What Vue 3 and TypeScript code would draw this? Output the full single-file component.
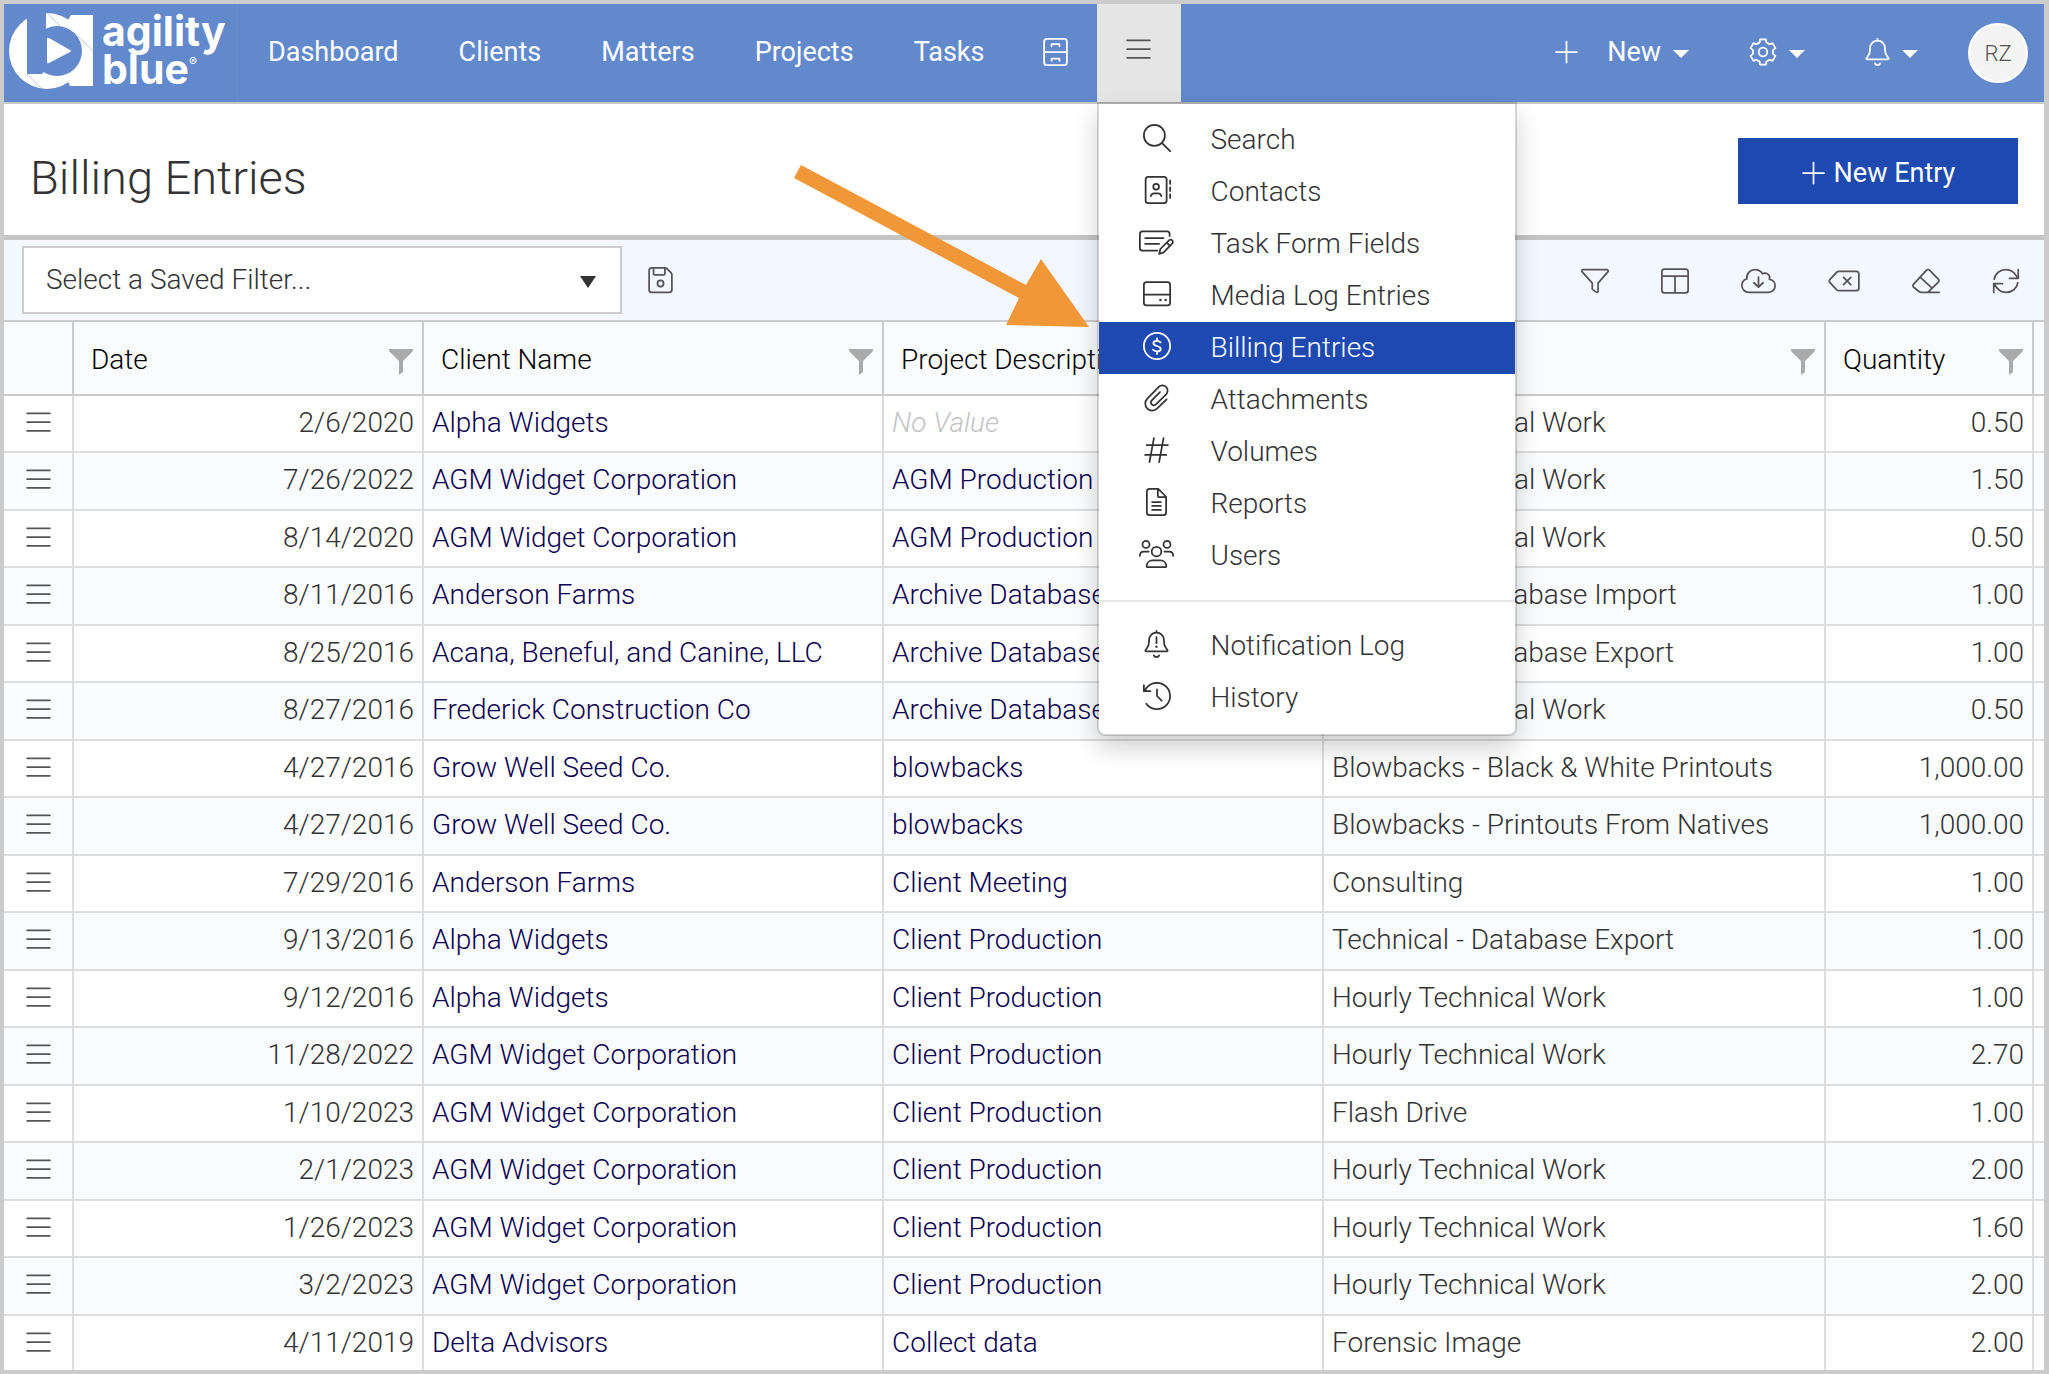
<script setup lang="ts">
import { h, ref } from 'vue'

interface Glyph {
  w: number
  d: string
  dots?: [number, number, number][]
  rings?: [number, number, number][]
}

interface MenuEntry {
  label: string
  icon: string
}

interface BillingRow {
  date: string
  client: string
  project: string
  activity: string
  quantity: string
}

// Six-toothed cog outline on a 512 grid
function cogOutline(): string {
  const steps: [number, number][] = [[-13, 238], [13, 238], [19, 186], [41, 186]]
  const points: string[] = []
  for (let tooth = 0; tooth < 6; tooth++) {
    for (const [offset, radius] of steps) {
      const angle = ((tooth * 60 - 90 + offset) * Math.PI) / 180
      points.push(`${Math.round(256 + radius * Math.cos(angle))} ${Math.round(256 + radius * Math.sin(angle))}`)
    }
  }
  return `M${points.join('L')}Z`
}

const bell =
  'M224 16v32M224 48c-80 0-136 62-136 136v32c0 48-16 90-46 126l-16 20c-12 14-6 30 14 30H408c20 0 26-16 14-30l-16-20c-30-36-46-78-46-126v-32c0-74-56-136-136-136zM176 464c6 20 26 32 48 32s42-12 48-32'

const glyphs: Record<string, Glyph> = {
  cabinet: {
    w: 448,
    d: 'M64 16H384a48 48 0 0 1 48 48V448a48 48 0 0 1-48 48H64a48 48 0 0 1-48-48V64a48 48 0 0 1 48-48zM16 256H432M152 152V112H296V152M152 416V376H296V416',
  },
  bars: { w: 448, d: 'M16 96H432M16 256H432M16 416H432' },
  plus: { w: 448, d: 'M224 64V448M32 256H416' },
  gear: { w: 512, d: cogOutline(), rings: [[256, 256, 78]] },
  bell: { w: 448, d: bell },
  bellAlert: { w: 448, d: bell + 'M224 128V240', dots: [[224, 304, 22]] },
  search: { w: 512, d: 'M344 344L496 496', rings: [[208, 208, 192]] },
  contacts: {
    w: 512,
    d: 'M96 16H384a48 48 0 0 1 48 48V448a48 48 0 0 1-48 48H96a48 48 0 0 1-48-48V64a48 48 0 0 1 48-48zM144 368c6-34 30-52 64-52h64c34 0 58 18 64 52M496 80V144M496 208V272M496 336V400',
    rings: [[240, 196, 52]],
  },
  form: {
    w: 640,
    d: 'M336 412H64a48 48 0 0 1-48-48V108a48 48 0 0 1 48-48H512a48 48 0 0 1 48 48V144M112 184H448M112 288H368M368 476L390 384L548 228c18-18 42-18 58 0c18 18 18 42 0 58L450 446zM508 268L566 326',
  },
  drive: {
    w: 512,
    d: 'M64 40H448a48 48 0 0 1 48 48V416a48 48 0 0 1-48 48H64a48 48 0 0 1-48-48V88a48 48 0 0 1 48-48zM16 268H496',
    dots: [[318, 366, 22], [414, 366, 22]],
  },
  dollar: {
    w: 512,
    d: 'M322 190c-20-22-42-30-70-30c-38 0-62 20-62 46c0 30 26 40 66 50s68 22 68 54c0 28-26 46-64 46c-32 0-56-10-76-32M256 116V160M256 356V400',
    rings: [[256, 256, 240]],
  },
  clip: {
    w: 448,
    d: 'M408 280L238 446C186 500 104 500 56 450C6 400 6 318 56 266L266 54C302 16 364 16 400 54C436 90 436 150 400 188L214 374c-22 22-56 22-76 0c-22-22-22-54 0-76L288 150',
  },
  hash: { w: 448, d: 'M177 40L96 476M353 40L272 476M44 165H432M16 347H404' },
  report: {
    w: 384,
    d: 'M64 16H224L368 160V448a48 48 0 0 1-48 48H64a48 48 0 0 1-48-48V64a48 48 0 0 1 48-48zM216 16V136a32 32 0 0 0 32 32H368M112 256H272M112 328H272M112 400H272',
  },
  users: {
    w: 640,
    d: 'M16 288c0-48 30-76 74-76h86M624 288c0-48-30-76-74-76h-86M152 496H488c8 0 12-6 12-14c0-66-48-110-106-110H246c-58 0-106 44-106 110c0 8 4 14 12 14z',
    rings: [[128, 80, 64], [512, 80, 64], [320, 212, 88]],
  },
  history: { w: 512, d: 'M16 56V168H136M34 160A240 240 0 1 1 60 396M256 136V256L340 340' },
  save: {
    w: 448,
    d: 'M16 80a48 48 0 0 1 48-48H304c14 0 26 6 36 14l76 76c10 10 16 22 16 36V432a48 48 0 0 1-48 48H64a48 48 0 0 1-48-48zM96 32V144a16 16 0 0 0 16 16H288a16 16 0 0 0 16-16V32',
    rings: [[224, 320, 56]],
  },
  filter: {
    w: 512,
    d: 'M40 48H472c22 0 32 24 18 40L312 296V444c0 18-20 26-34 16l-62-46c-6-5-10-12-10-20V296L22 88C8 72 18 48 40 48z',
  },
  layout: {
    w: 512,
    d: 'M64 40H448a48 48 0 0 1 48 48V424a48 48 0 0 1-48 48H64a48 48 0 0 1-48-48V88a48 48 0 0 1 48-48zM16 168H496M256 168V472',
  },
  cloud: {
    w: 640,
    d: 'M144 464C72 464 16 408 16 338C16 280 54 232 106 216C98 118 172 48 258 48C318 48 366 78 394 124C458 90 546 140 520 228C584 236 624 286 624 344C624 412 570 464 504 464ZM320 184V368M236 288L320 368L404 288',
  },
  backspace: {
    w: 576,
    d: 'M192 80H512a48 48 0 0 1 48 48V384a48 48 0 0 1-48 48H192c-14 0-26-4-36-14L28 280c-14-14-14-34 0-48L156 94c10-10 22-14 36-14zM280 190L412 322M412 190L280 322',
  },
  eraser: {
    w: 512,
    d: 'M496 464H164c-12 0-22-4-30-12L30 370c-18-18-18-40 0-58L266 58c16-16 38-16 54 0L482 222c16 16 16 38 0 54L290 464M148 184L366 386',
  },
  refresh: {
    w: 512,
    d: 'M40 224C56 120 146 48 256 48c92 0 158 52 208 144M480 48V208H320M472 288c-16 104-106 176-216 176c-92 0-158-52-208-144M32 464V304H192',
  },
}

const Icon = (props: { name: string }) => {
  const g = glyphs[props.name]
  return h(
    'svg',
    {
      class: 'icon',
      viewBox: `0 0 ${g.w} 512`,
      height: 28,
      width: Math.round((g.w * 28) / 512),
      fill: 'none',
      stroke: 'currentColor',
      'stroke-width': 32,
      'stroke-linecap': 'round',
      'stroke-linejoin': 'round',
      'aria-hidden': 'true',
    },
    [
      h('path', { d: g.d }),
      ...(g.rings ?? []).map(([cx, cy, r]) => h('circle', { cx, cy, r })),
      ...(g.dots ?? []).map(([cx, cy, r]) => h('circle', { cx, cy, r, fill: 'currentColor', stroke: 'none' })),
    ],
  )
}
Icon.props = ['name']

const links: string[] = ['Dashboard', 'Clients', 'Matters', 'Projects', 'Tasks']

const menu: MenuEntry[] = [
  { label: 'Search', icon: 'search' },
  { label: 'Contacts', icon: 'contacts' },
  { label: 'Task Form Fields', icon: 'form' },
  { label: 'Media Log Entries', icon: 'drive' },
  { label: 'Billing Entries', icon: 'dollar' },
  { label: 'Attachments', icon: 'clip' },
  { label: 'Volumes', icon: 'hash' },
  { label: 'Reports', icon: 'report' },
  { label: 'Users', icon: 'users' },
]

const logMenu: MenuEntry[] = [
  { label: 'Notification Log', icon: 'bellAlert' },
  { label: 'History', icon: 'history' },
]

const tools: MenuEntry[] = [
  { label: 'Filter', icon: 'filter' },
  { label: 'Layout', icon: 'layout' },
  { label: 'Download', icon: 'cloud' },
  { label: 'Clear filters', icon: 'backspace' },
  { label: 'Reset', icon: 'eraser' },
  { label: 'Refresh', icon: 'refresh' },
]

const columns: string[] = ['Date', 'Client Name', 'Project Description', 'Activity', 'Quantity']

const savedFilter = ref('')
const menuOpen = ref(true)
const current = ref('Billing Entries')

const toRow = ([date, client, project, activity, quantity]: string[]): BillingRow => ({
  date,
  client,
  project,
  activity,
  quantity,
})

const rows: BillingRow[] = [
  ['2/6/2020', 'Alpha Widgets', '', 'Hourly Technical Work', '0.50'],
  ['7/26/2022', 'AGM Widget Corporation', 'AGM Production', 'Hourly Technical Work', '1.50'],
  ['8/14/2020', 'AGM Widget Corporation', 'AGM Production', 'Hourly Technical Work', '0.50'],
  ['8/11/2016', 'Anderson Farms', 'Archive Database', 'Technical - Database Import', '1.00'],
  ['8/25/2016', 'Acana, Beneful, and Canine, LLC', 'Archive Database', 'Technical - Database Export', '1.00'],
  ['8/27/2016', 'Frederick Construction Co', 'Archive Database', 'Hourly Technical Work', '0.50'],
  ['4/27/2016', 'Grow Well Seed Co.', 'blowbacks', 'Blowbacks - Black & White Printouts', '1,000.00'],
  ['4/27/2016', 'Grow Well Seed Co.', 'blowbacks', 'Blowbacks - Printouts From Natives', '1,000.00'],
  ['7/29/2016', 'Anderson Farms', 'Client Meeting', 'Consulting', '1.00'],
  ['9/13/2016', 'Alpha Widgets', 'Client Production', 'Technical - Database Export', '1.00'],
  ['9/12/2016', 'Alpha Widgets', 'Client Production', 'Hourly Technical Work', '1.00'],
  ['11/28/2022', 'AGM Widget Corporation', 'Client Production', 'Hourly Technical Work', '2.70'],
  ['1/10/2023', 'AGM Widget Corporation', 'Client Production', 'Flash Drive', '1.00'],
  ['2/1/2023', 'AGM Widget Corporation', 'Client Production', 'Hourly Technical Work', '2.00'],
  ['1/26/2023', 'AGM Widget Corporation', 'Client Production', 'Hourly Technical Work', '1.60'],
  ['3/2/2023', 'AGM Widget Corporation', 'Client Production', 'Hourly Technical Work', '2.00'],
  ['4/11/2019', 'Delta Advisors', 'Collect data', 'Forensic Image', '2.00'],
].map(toRow)
</script>

<template>
  <div class="app">
    <header class="topbar">
      <a class="brand" href="#" aria-label="agility blue home">
        <svg class="mark" viewBox="8 12 86 78" width="86" height="78" aria-hidden="true">
          <g fill="#fff">
            <circle cx="47" cy="51" r="38" />
            <path d="M68 20L71 15H93V86H70L68 81Z" />
          </g>
          <g class="cut">
            <path d="M27 12H46V60L44 71L42 74H27Z" />
            <circle cx="57" cy="51" r="25" />
          </g>
          <path d="M47 39Q47 37 49 38L70 50Q72 51 70 52L49 63Q47 64 47 62Z" fill="#fff" />
          <path class="seam" d="M47 13L60 26M27 74L41 88M78 36L93 51" />
        </svg>
        <span class="wordmark">
          <span>agility</span>
          <span>blue<sup>®</sup></span>
        </span>
      </a>

      <nav class="nav" aria-label="Main">
        <a v-for="link in links" :key="link" class="nav-link" href="#">{{ link }}</a>
        <a class="nav-link nav-icon" href="#" aria-label="Cabinet"><Icon name="cabinet" /></a>
        <div class="more">
          <button
            class="more-button"
            type="button"
            aria-label="More"
            :aria-expanded="menuOpen"
            @click="menuOpen = !menuOpen"
          >
            <Icon name="bars" />
          </button>
          <div v-if="menuOpen" class="menu">
            <a
              v-for="item in menu"
              :key="item.label"
              class="menu-item"
              :class="{ active: item.label === current }"
              href="#"
              @click.prevent="current = item.label"
            >
              <span class="menu-icon"><Icon :name="item.icon" /></span>{{ item.label }}
            </a>
            <hr class="divider" />
            <a v-for="item in logMenu" :key="item.label" class="menu-item" href="#">
              <span class="menu-icon"><Icon :name="item.icon" /></span>{{ item.label }}
            </a>
          </div>
          <svg class="pointer" viewBox="0 0 296 164" width="296" height="164" aria-hidden="true">
            <path d="M7 1L232 121L247 95L295 163L212 161L225 134L0 14Z" fill="#f09837" />
          </svg>
        </div>
      </nav>

      <div class="account">
        <button class="drop" type="button">
          <Icon name="plus" /><span class="drop-label">New</span><span class="caret"></span>
        </button>
        <button class="drop" type="button" aria-label="Settings"><Icon name="gear" /><span class="caret"></span></button>
        <button class="drop" type="button" aria-label="Notifications"><Icon name="bell" /><span class="caret"></span></button>
        <button class="avatar" type="button">RZ</button>
      </div>
    </header>

    <section class="title-row">
      <h1>Billing Entries</h1>
      <button class="primary" type="button"><Icon name="plus" />New Entry</button>
    </section>

    <section class="toolbar">
      <div class="picker">
        <select v-model="savedFilter" aria-label="Saved filter">
          <option value="">Select a Saved Filter...</option>
        </select>
        <svg class="picker-arrow" viewBox="0 0 16 12" width="16" height="12" aria-hidden="true">
          <path d="M0 0H16L8 12Z" fill="currentColor" />
        </svg>
      </div>
      <button class="tool" type="button" aria-label="Save filter"><Icon name="save" /></button>
      <div class="tools">
        <button v-for="tool in tools" :key="tool.label" class="tool" type="button" :aria-label="tool.label">
          <Icon :name="tool.icon" />
        </button>
      </div>
    </section>

    <main class="grid">
      <table>
        <colgroup>
          <col class="c-menu" />
          <col class="c-date" />
          <col class="c-client" />
          <col class="c-project" />
          <col />
          <col class="c-quantity" />
          <col class="c-end" />
        </colgroup>
        <thead>
          <tr>
            <th></th>
            <th v-for="column in columns" :key="column" scope="col">
              <div class="head">
                <span>{{ column }}</span>
                <button class="head-filter" type="button" :aria-label="'Filter ' + column">
                  <svg viewBox="0 0 24 26" width="24" height="26" aria-hidden="true">
                    <path d="M0 0H24V2L14 12V23L10 26V12L0 2Z" fill="currentColor" />
                  </svg>
                </button>
              </div>
            </th>
            <th></th>
          </tr>
        </thead>
        <tbody>
          <tr v-for="(row, index) in rows" :key="index">
            <td class="row-menu">
              <button type="button" aria-label="Row actions"><Icon name="bars" /></button>
            </td>
            <td class="number">{{ row.date }}</td>
            <td><a href="#">{{ row.client }}</a></td>
            <td>
              <a v-if="row.project" href="#">{{ row.project }}</a>
              <em v-else>No Value</em>
            </td>
            <td>{{ row.activity }}</td>
            <td class="number">{{ row.quantity }}</td>
            <td></td>
          </tr>
        </tbody>
      </table>
    </main>
  </div>
</template>

<style>
body {
  margin: 0;
}
</style>

<style scoped>
.app {
  display: flex;
  flex-direction: column;
  box-sizing: border-box;
  height: 100vh;
  overflow: hidden;
  border: 4px solid #cbcbcb;
  border-right-width: 5px;
  background: #fff;
  color: #333;
  font-family: Roboto, sans-serif;
  font-size: 28px;
  font-weight: 350;
  line-height: 36px;
}

a {
  color: inherit;
  text-decoration: none;
}

button {
  margin: 0;
  padding: 0;
  border: 0;
  background: none;
  color: inherit;
  font: inherit;
  cursor: pointer;
}

.icon {
  display: block;
  flex: none;
}

/* Top bar */
.topbar {
  display: flex;
  flex: none;
  height: 98px;
  border-bottom: 2px solid #c8c8c8;
  background: #6389cd;
  color: #fff;
}

.brand {
  display: flex;
  flex: none;
  box-sizing: border-box;
  width: 234px;
  padding: 8px 0 0 4px;
  gap: 8px;
  border-right: 1px solid #6a8dcc;
}

.mark {
  flex: none;
}

.cut {
  fill: #6389cd;
}

.seam {
  stroke: #b9caea;
  stroke-width: 1;
  fill: none;
}

.wordmark {
  display: flex;
  flex-direction: column;
  font-family: Inter, sans-serif;
  font-size: 41px;
  font-weight: 700;
  line-height: 38px;
}

.wordmark sup {
  font-size: 12px;
  font-weight: 400;
  line-height: 0;
  vertical-align: 18px;
}

.nav {
  display: flex;
}

.nav-link {
  display: flex;
  align-items: center;
  padding: 0 30px 2px;
}

.nav-icon {
  padding: 0 29px 2px 28px;
}

.nav-link,
.drop,
.primary {
  font-size: 27px;
  font-weight: 400;
}

.more {
  position: relative;
  display: flex;
}

.more-button {
  display: flex;
  align-items: center;
  justify-content: center;
  width: 84px;
  padding-bottom: 8px;
  background: #e5e5e5;
  color: #555;
}

.menu {
  position: absolute;
  z-index: 2;
  top: 100%;
  left: 0;
  box-sizing: border-box;
  width: 420px;
  padding: 10px 0;
  border: 2px solid rgba(0, 0, 0, 0.15);
  border-radius: 0 0 8px 8px;
  background: #fff;
  background-clip: padding-box;
  box-shadow: 0 12px 24px rgba(0, 0, 0, 0.18);
  color: #333;
}

.menu-item {
  display: flex;
  align-items: center;
  height: 52px;
  padding-left: 40px;
  gap: 36px;
}

.menu-item.active {
  background: #1d49b0;
  color: #fff;
}

.menu-icon {
  display: flex;
  justify-content: center;
  width: 36px;
  padding-bottom: 4px;
}

.divider {
  height: 2px;
  margin: 18px 0;
  border: 0;
  background: #e5e5e5;
}

.pointer {
  position: absolute;
  z-index: 3;
  top: 160px;
  right: 100%;
  margin-right: 7px;
  pointer-events: none;
}

.account {
  display: flex;
  align-items: center;
  margin-left: auto;
  padding-right: 16px;
}

.drop {
  display: flex;
  align-items: center;
  gap: 12px;
  padding-bottom: 2px;
}

.drop + .drop {
  margin-left: 60px;
}

.drop-label {
  margin-left: 16px;
}

.caret {
  margin-top: 4px;
  border: 8px solid transparent;
  border-top-color: #fff;
  border-bottom-width: 0;
}

.avatar {
  box-sizing: border-box;
  width: 60px;
  height: 60px;
  margin-left: 50px;
  padding-top: 2px;
  border: 2px solid #fff;
  border-radius: 50%;
  background: #f4f4f4;
  color: #555;
  font-size: 22px;
}

/* Title */
.title-row {
  display: flex;
  flex: none;
  align-items: center;
  justify-content: space-between;
  box-sizing: border-box;
  height: 136px;
  padding: 2px 26px 0;
  border-bottom: 5px solid #c5c5c5;
}

h1 {
  margin: 0;
  padding-top: 14px;
  font-size: 47px;
  font-weight: 300;
  line-height: 64px;
}

.primary {
  display: flex;
  align-items: center;
  justify-content: center;
  box-sizing: border-box;
  width: 280px;
  height: 66px;
  padding-top: 4px;
  gap: 8px;
  background: #1d49b0;
  color: #fff;
}

/* Filter toolbar */
.toolbar {
  display: flex;
  flex: none;
  align-items: center;
  height: 80px;
  padding: 0 24px 0 18px;
  border-bottom: 2px solid #ccc;
  background: #f3f7ff;
}

.picker {
  position: relative;
  width: 600px;
  margin-right: 26px;
}

.picker select {
  display: block;
  box-sizing: border-box;
  width: 100%;
  height: 68px;
  margin: 0;
  padding: 0 48px 0 22px;
  border: 2px solid #ccc;
  border-radius: 0;
  background: #fff;
  color: #333;
  font: inherit;
  appearance: none;
}

.picker-arrow {
  position: absolute;
  top: 30px;
  right: 26px;
  pointer-events: none;
}

.tool {
  color: #555;
}

.tools {
  display: flex;
  margin-left: auto;
  padding-top: 2px;
  gap: 52px;
}

/* Entries table */
.grid {
  flex: 1;
  min-height: 0;
  overflow: hidden;
}

table {
  width: 100%;
  border-collapse: separate;
  border-spacing: 0;
  table-layout: fixed;
}

.c-menu {
  width: 70px;
}

.c-date {
  width: 350px;
}

.c-client {
  width: 460px;
}

.c-project {
  width: 440px;
}

.c-quantity {
  width: 208px;
}

.c-end {
  width: 10px;
}

th,
td {
  box-sizing: border-box;
  height: 57px;
  padding: 0 8px 2px;
  border-right: 2px solid #ddd;
  border-bottom: 2px solid #ddd;
  text-align: left;
  white-space: nowrap;
  overflow: hidden;
}

th {
  height: 74px;
  padding: 4px 9px 0 17px;
  border-color: #ccc;
  background: #fafbfd;
  color: #000;
  font-weight: 350;
}

tr > :last-child {
  border-right: 0;
  padding: 0;
}

tbody tr:nth-child(even) td {
  height: 58px;
  background: #fafbfd;
}

.head {
  display: flex;
  align-items: center;
  justify-content: space-between;
}

.head-filter {
  padding-top: 4px;
  color: #aaa;
}

.head-filter svg {
  display: block;
}

td.number {
  text-align: right;
}

td a {
  color: #0a0050;
}

td em {
  color: #c4c4c4;
}

td.row-menu {
  padding: 0 0 4px;
  color: #555;
}

.row-menu button {
  display: block;
  margin: 0 auto;
}
</style>
